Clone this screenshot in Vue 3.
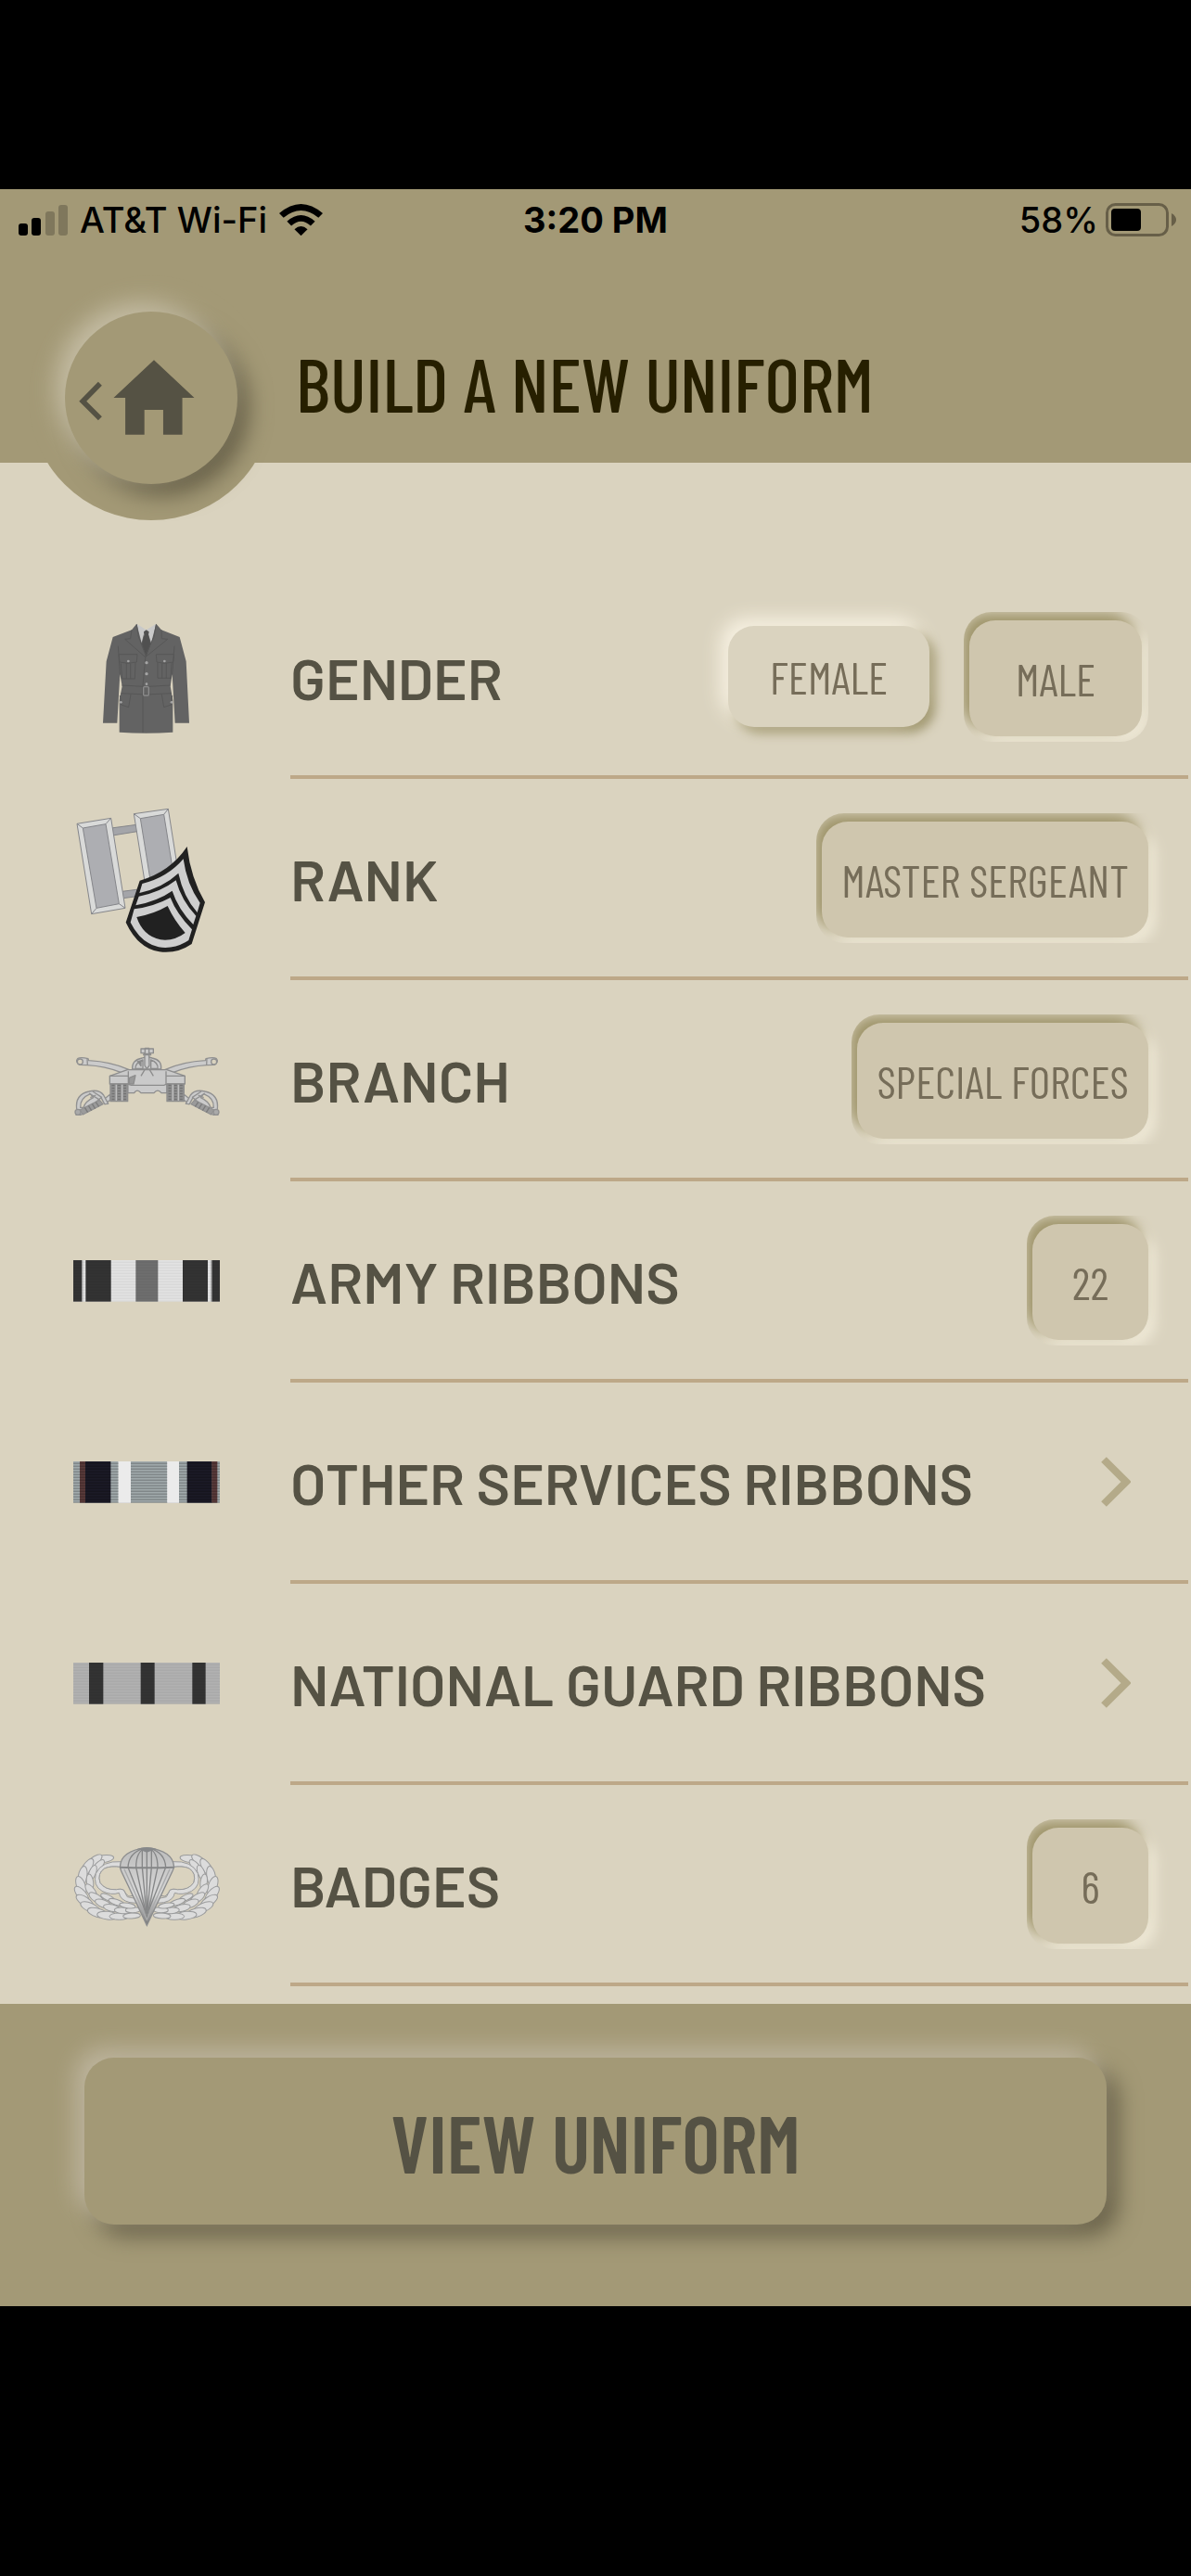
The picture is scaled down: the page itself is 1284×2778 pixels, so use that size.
<script setup>
import { ref } from "vue";

const gender = ref("MALE");
const genders = ["FEMALE", "MALE"];

const rows = [
    { key: "gender", label: "GENDER" },
    { key: "rank", label: "RANK", value: "MASTER SERGEANT" },
    { key: "branch", label: "BRANCH", value: "SPECIAL FORCES" },
    { key: "army", label: "ARMY RIBBONS", value: "22" },
    { key: "other", label: "OTHER SERVICES RIBBONS" },
    { key: "guard", label: "NATIONAL GUARD RIBBONS" },
    { key: "badges", label: "BADGES", value: "6" },
];

// stripes: [x, width, colour]
const ribbons = {
    army: [
        [57, 474, "#e2e2e2"], [57, 28, "#333"], [97, 82, "#333"], [259, 72, "#6e6e6e"],
        [411, 81, "#333"], [505, 26, "#333"],
    ],
    other: [
        [57, 474, "#a0a9ab"], [78, 19, "#593a3a"], [96, 82, "#1b1a26"], [203, 40, "#ebebeb"],
        [361, 38, "#ebebeb"], [425, 81, "#1b1a26"], [505, 18, "#593a3a"],
    ],
    guard: [
        [57, 474, "#b1b1b1"], [108, 46, "#333"], [275, 45, "#333"], [442, 43, "#333"],
    ],
};

// feathers of the left wing: [cx, cy, rx, ry, rotation]
const feathers = [
    [154, 103, 34, 12, -8], [122, 112, 34, 13, -38], [101, 132, 34, 14, -58], [87, 160, 34, 14, -80],
    [82, 190, 32, 14, 70], [84, 218, 32, 14, 50], [94, 240, 32, 14, 34], [112, 260, 34, 14, 24],
    [136, 277, 34, 14, 16], [168, 286, 34, 13, 6], [206, 289, 32, 11, 0], [246, 287, 28, 9, -3],
    [138, 126, 26, 11, -46], [119, 148, 26, 11, -68], [111, 178, 26, 11, 82], [115, 208, 28, 12, 54],
    [132, 230, 28, 12, 34], [154, 248, 28, 12, 22], [182, 262, 28, 11, 12], [216, 270, 26, 10, 4],
    [250, 268, 24, 9, -2], [168, 228, 24, 9, 24], [196, 243, 26, 9, 18], [232, 254, 26, 8, 8],
];
</script>

<template>
    <main class="page">
        <header class="header">
            <div class="status">
                <div class="status-left">
                    <svg class="signal" viewBox="0 0 53 34" aria-hidden="true">
                        <rect x="0" y="21" width="10" height="13" rx="3" />
                        <rect x="14" y="15" width="10" height="19" rx="3" />
                        <rect x="29" y="8" width="10" height="26" rx="3" opacity=".22" />
                        <rect x="43" y="1" width="10" height="33" rx="3" opacity=".22" />
                    </svg>
                    <span>AT&amp;T Wi-Fi</span>
                    <svg class="wifi" viewBox="0 0 140 102" aria-hidden="true">
                        <path d="M0 30Q70-30 140 30L126 44Q70-2 14 44Z" />
                        <path d="M25 56Q70 16 115 56L101 70Q70 42 39 70Z" />
                        <path d="M49 81Q70 62 91 81L70 102Z" />
                    </svg>
                </div>
                <strong class="time">3:20 PM</strong>
                <div class="status-right">
                    <span>58%</span>
                    <svg class="battery" viewBox="0 0 76 36" aria-hidden="true">
                        <rect x="1.5" y="1.5" width="65" height="33" rx="9" fill="none" stroke="#675f48" stroke-width="3" />
                        <rect x="6" y="6" width="32" height="24" rx="4" />
                        <path d="M71 11Q76 14 76 18T71 25Z" fill="#675f48" />
                    </svg>
                </div>
            </div>
            <div class="nav">
                <div class="halo">
                    <button class="home" type="button" aria-label="Back to home">
                        <svg viewBox="210 170 560 560" aria-hidden="true">
                            <path d="M324 404L268 461L324 517" fill="none" stroke="#555244" stroke-width="17" />
                            <path d="M499 327L630 450H591V570H529V489H468V570H406V450H368Z" fill="#555244" />
                        </svg>
                    </button>
                </div>
                <h1 class="title">BUILD A NEW UNIFORM</h1>
            </div>
        </header>

        <ul class="list">
            <li v-for="row in rows" :key="row.key" class="row">
                <svg v-if="row.key === 'gender'" class="icon" viewBox="0 15 600 510" aria-hidden="true">
                    <g stroke-linejoin="round">
                        <path d="M262 98L293 118L325 98L316 200H276Z" fill="#c9c9c9" />
                        <path
                            d="M262 98L246 118L185 141L164 220L153 419H199L208 262L215 300L206 345V449Q293 455 379 449V345L371 300L377 262L386 419H432L422 220L401 141L342 118L325 98L309 160L300 132L293 200L285 132L278 160Z"
                            fill="#636363"
                        />
                        <path d="M285 124L293 118L302 124L300 134L307 165L293 205L279 165L286 134Z" fill="#505050" />
                        <g fill="none" stroke="#575757" stroke-width="3">
                            <path d="M246 118L242 146L224 148L290 206L362 148L343 146L342 118" />
                            <path d="M262 100L268 140L291 200L318 140L325 100M291 200L282 300V450" />
                            <path d="M204 197H264L262 222L234 226L207 222ZM325 197H383L380 222L352 226L327 222Z" />
                            <path d="M211 226L215 276H256L258 224M229 226V276M242 226V276M330 224V274H372L375 224M344 226V274M358 226V274" />
                            <path d="M214 297Q293 306 371 297M212 323Q293 331 374 323" />
                            <path d="M208 330L212 360L236 368L243 326M377 330L374 360L350 368L343 326" />
                            <path d="M208 262L202 170M377 262L384 170" />
                        </g>
                        <rect x="284" y="302" width="17" height="28" rx="3" fill="none" stroke="#8b8b8b" stroke-width="4" />
                        <g fill="#a5a5a5">
                            <circle cx="294" cy="224" r="5" />
                            <circle cx="294" cy="260" r="5" />
                            <circle cx="294" cy="293" r="4" />
                            <circle cx="235" cy="219" r="4" />
                            <circle cx="352" cy="219" r="4" />
                            <circle cx="211" cy="352" r="4" />
                            <circle cx="375" cy="352" r="4" />
                        </g>
                    </g>
                </svg>

                <svg v-else-if="row.key === 'rank'" class="icon" viewBox="0 5 600 570" aria-hidden="true">
                    <g stroke="#85868a" stroke-width="3" stroke-linejoin="round">
                        <path d="M180 128L262 117L264 139L184 152ZM215 333L300 322V344L218 355Z" fill="#a4a5a9" />
                        <path d="M69 114L179 96L225 387L116 406Z" fill="#d9dad9" />
                        <path d="M88 128L162 115L205 373L132 387Z" fill="#adaeb2" />
                        <path d="M69 114L88 128M179 96L162 115M225 387L205 373M116 406L132 387" />
                        <path d="M253 82L364 66L410 357L300 376Z" fill="#d9dad9" />
                        <path d="M274 97L350 84L392 345L316 357Z" fill="#adaeb2" />
                        <path d="M253 82L274 97M364 66L350 84" />
                    </g>
                    <path d="M425 188Q437 290 483 368L440 503Q392 536 335 528Q266 517 227 433L272 298Q370 270 425 188Z" fill="#212121" />
                    <path d="M413 228Q424 310 467 370L458 401Q413 350 397 274Q348 320 271 338L280 308Q362 288 413 228Z" fill="#cecece" />
                    <path d="M389 297Q408 365 454 412L445 440Q396 390 377 331Q332 363 259 378L269 349Q339 336 389 297Z" fill="#cecece" />
                    <path d="M371 353Q391 405 441 456L430 491Q385 521 333 513Q275 500 242 433L254 390Q318 382 371 353Z" fill="#cecece" />
                    <path d="M362 380Q383 426 419 467Q382 495 339 489Q282 477 262 416Q320 405 362 380Z" fill="#212121" />
                </svg>

                <svg v-else-if="row.key === 'branch'" class="icon" viewBox="0 -4 600 390" aria-hidden="true">
                    <defs>
                        <g id="sabre" stroke="#919191" stroke-width="4" stroke-linejoin="round" fill="#cbcbcb">
                            <path d="M71 124Q80 118 105 124L107 130Q180 134 238 160L212 169Q160 148 101 145L78 144Q62 134 71 124Z" />
                            <circle cx="79" cy="134" r="9" fill="#dad3bf" />
                            <path d="M102 122L103 146" />
                            <path d="M153 258L176 240V258L160 271Z" />
                            <path d="M68 288Q62 240 108 230Q140 222 155 242L170 270L158 271L147 250L82 306L66 306Z" />
                            <path d="M80 282Q78 252 112 238L122 250Q96 262 90 282Z" fill="#dad3bf" />
                            <path d="M112 250L130 242M108 236L140 256M120 230L150 250" />
                            <path d="M78 290L142 258L153 271L88 305Z" fill="#9b9b9b" />
                            <path d="M94 282L104 298M106 276L116 292M118 270L128 286M130 265L140 279" stroke="#7b7b7b" />
                            <circle cx="72" cy="297" r="9" fill="#aaa" />
                        </g>
                    </defs>
                    <use href="#sabre" />
                    <use href="#sabre" transform="matrix(-1 0 0 1 591 0)" />
                    <g stroke="#8d8d8d" stroke-width="4" stroke-linejoin="round" fill="#cacaca">
                        <path d="M233 206H360V235H342Q330 220 318 235H276Q263 220 254 235H233Z" />
                        <path d="M175 180L232 160H360L418 180V206H360L350 210H245L233 206H175Z" />
                        <path d="M248 158Q246 128 280 122Q295 116 312 122Q344 128 341 158Z" />
                        <path d="M258 156Q258 136 282 128V156ZM308 128Q332 136 330 156H308Z" />
                        <path d="M276 92H316V106H304L308 112H284L288 106H276ZM289 90H302V108H289Z" />
                        <path d="M288 112H302L303 146L295 157L288 146Z" />
                        <path d="M175 180H235M357 180H418M235 165V206M357 165V206M288 160L276 180M304 160L316 180" fill="none" />
                        <path d="M265 132H276V148Z" fill="#858585" />
                        <path d="M238 186L258 178L252 206H238Z" fill="#999" />
                        <path d="M177 206H233V262H177ZM360 206H415V262H360Z" fill="#929292" />
                        <path d="M196 208V260M215 208V260M379 208V260M397 208V260" stroke="#bebebe" />
                        <path
                            d="M186 208V260M205 208V260M224 208V260M369 208V260M388 208V260M406 208V260"
                            stroke="#737373" stroke-width="9" stroke-dasharray="5 4"
                        />
                    </g>
                </svg>

                <svg v-else-if="ribbons[row.key]" class="icon" viewBox="0 52 600 140" aria-hidden="true">
                    <defs>
                        <pattern :id="`weave-${row.key}`" width="20" height="9" patternUnits="userSpaceOnUse">
                            <rect width="20" height="3" fill="#000" :opacity="row.key === 'other' ? 0.3 : 0.06" />
                        </pattern>
                    </defs>
                    <rect v-for="s in ribbons[row.key]" :key="s[0] + s[2]" :x="s[0]" y="58" :width="s[1]" height="134" :fill="s[2]" />
                    <template v-if="row.key === 'army'">
                        <rect x="85" y="58" width="3" height="134" fill="#999" />
                        <rect x="502" y="58" width="3" height="134" fill="#999" />
                    </template>
                    <rect x="57" y="58" width="474" height="134" :fill="`url(#weave-${row.key})`" />
                    <template v-if="row.key === 'other'">
                        <rect x="203" y="58" width="40" height="134" fill="#ebebeb" />
                        <rect x="361" y="58" width="38" height="134" fill="#ebebeb" />
                    </template>
                </svg>

                <svg v-else class="icon" viewBox="0 -10 600 390" aria-hidden="true">
                    <defs>
                        <linearGradient id="canopy" x1="0" y1="0" x2="0" y2="1">
                            <stop offset="0" stop-color="#bcbcbc" />
                            <stop offset=".6" stop-color="#d8d8d8" />
                            <stop offset="1" stop-color="#777" />
                        </linearGradient>
                        <g id="wing" stroke="#9a9b9c" stroke-width="3" fill="#dcdcdc">
                            <ellipse
                                v-for="(f, i) in feathers" :key="i"
                                :cx="f[0]" :cy="f[1]" :rx="f[2]" :ry="f[3]"
                                :transform="`rotate(${f[4]} ${f[0]} ${f[1]})`"
                            />
                            <path d="M212 112Q150 108 130 150Q120 190 150 207Q180 222 205 213Q208 236 240 244L262 246V232L232 226Q225 214 220 203Q210 198 196 202Q160 204 144 180Q134 150 158 134Q178 124 214 130Z" />
                            <path d="M214 130Q178 124 158 134Q134 150 144 180Q160 204 196 202Q210 198 220 203Q226 216 236 224L250 222Z" fill="#dad3bf" />
                        </g>
                    </defs>
                    <use href="#wing" />
                    <use href="#wing" transform="matrix(-1 0 0 1 590 0)" />
                    <path d="M208 130Q210 76 295 67Q380 76 383 130L378 142L295 318L212 142Z" fill="url(#canopy)" stroke="#8c8d8e" stroke-width="4" />
                    <g fill="none" stroke="#858687" stroke-width="4">
                        <path d="M208 130Q295 134 383 130" stroke-width="6" />
                        <path d="M295 68V300M289 68Q260 80 260 130L292 280M301 68Q330 80 330 130L298 280" />
                        <path d="M284 69Q236 84 234 130L289 270M306 69Q354 84 356 130L301 270M280 70V130L293 270M310 70V130L297 270" />
                        <path d="M222 136L295 300L369 136" stroke="#a9aaab" />
                        <path d="M264 70Q295 62 326 70L295 82Z" fill="#86888a" stroke="none" />
                    </g>
                </svg>

                <div class="row-body">
                    <h2 class="label">{{ row.label }}</h2>
                    <div v-if="row.key === 'gender'" class="genders">
                        <template v-for="g in genders" :key="g">
                            <div v-if="gender === g" class="well closed">
                                <button class="pressed" type="button" aria-pressed="true">{{ g }}</button>
                            </div>
                            <button v-else class="raised" type="button" aria-pressed="false" @click="gender = g">{{ g }}</button>
                        </template>
                    </div>
                    <div v-else-if="row.value" class="well">
                        <button class="pressed" type="button">{{ row.value }}</button>
                    </div>
                    <button v-else class="more" type="button" :aria-label="`Open ${row.label}`">
                        <svg viewBox="0 0 32 56" aria-hidden="true">
                            <path d="M3 4L27 28L3 52" fill="none" stroke="#b4aa89" stroke-width="8" />
                        </svg>
                    </button>
                </div>
            </li>
        </ul>

        <footer class="footer">
            <button class="view" type="button">VIEW UNIFORM</button>
        </footer>
    </main>
</template>

<style>
body {
    margin: 0;
    background: #000;
}
</style>

<style scoped>
.page {
    padding: 204px 0 291px;
    background: #000;
    font-family: Barlow, Roboto, sans-serif;
    color: #555244;
}

button {
    border: 0;
    padding: 0;
    background: none;
    color: inherit;
    cursor: pointer;
}

svg {
    display: block;
    flex: none;
}

.header {
    position: relative;
    z-index: 1;
    background: #a39976;
}

.status {
    display: grid;
    grid-template-columns: 1fr auto 1fr;
    align-items: center;
    height: 66px;
    padding: 0 16px;
    font-family: Inter, sans-serif;
    font-size: 38px;
    font-weight: 500;
    color: #000;
}

.status-left,
.status-right {
    display: flex;
    align-items: center;
}

.status-left {
    gap: 13px;
    padding-left: 4px;
}

.status-right {
    justify-content: flex-end;
    gap: 8px;
}

.time {
    font-weight: 700;
}

.signal {
    width: 53px;
}

.wifi {
    width: 47px;
}

.battery {
    width: 76px;
}

.nav {
    display: flex;
    gap: 24px;
    padding: 27px 31px 0;
}

.halo {
    flex: none;
    width: 264px;
    height: 264px;
    margin-bottom: -62px;
    display: flex;
    align-items: center;
    justify-content: center;
    border-radius: 50%;
    background: #a39976;
}

.home {
    width: 186px;
    height: 186px;
    border-radius: 50%;
    background: #a39976;
    box-shadow: -10px -10px 24px #c4bca3, 12px 12px 24px #676048;
}

.title {
    margin: 76px 0 0;
    font-family: "Barlow Condensed", "Roboto Condensed", "Liberation Sans Narrow", sans-serif;
    font-size: 81px;
    font-weight: 500;
    line-height: 80px;
    white-space: nowrap;
    color: #261f00;
}

.list {
    margin: 0;
    padding: 124px 3px 19px 60px;
    list-style: none;
    background: #dad3bf;
}

.row {
    display: flex;
    align-items: stretch;
    gap: 53px;
}

.icon {
    width: 200px;
    align-self: center;
    margin-bottom: 4px;
}

.row-body {
    flex: 1;
    display: flex;
    align-items: center;
    justify-content: space-between;
    height: 213px;
    padding-right: 19px;
    border-bottom: 4px solid #bda888;
}

.label {
    margin: 0;
    font-size: 62px;
    font-weight: 600;
    white-space: nowrap;
}

.genders {
    display: flex;
    align-items: center;
    gap: 37px;
    padding-right: 24px;
}

.raised,
.pressed {
    border-radius: 28px;
    font-family: "Barlow Condensed", "Roboto Condensed", "Liberation Sans Narrow", sans-serif;
    font-size: 49px;
    font-weight: 400;
    white-space: nowrap;
    color: #766d59;
}

.raised {
    width: 217px;
    height: 109px;
    background: #dad3bf;
    box-shadow: -8px -8px 20px #f8f2e3, 6px 6px 12px #9c936a;
}

.well {
    padding: 9px 24px 6px 6px;
    overflow: hidden;
    border-radius: 30px 0 0 30px;
}

.well.closed {
    padding-right: 7px;
    border-radius: 30px;
}

.pressed {
    display: block;
    min-width: 125px;
    height: 125px;
    padding: 0 21px;
    background: #cfc6ae;
    box-shadow: -8px -8px 14px #a0966c, 8px 8px 14px #eee8d6;
}

.closed .pressed {
    min-width: 186px;
}

.more {
    padding-right: 43px;
}

.more svg {
    width: 32px;
}

.footer {
    padding: 58px 91px 88px;
    background: #a39976;
}

.view {
    width: 100%;
    height: 180px;
    border-radius: 32px;
    background: #a39976;
    box-shadow: -10px -10px 24px #beb59e, 12px 12px 24px #676048;
    font-family: "Barlow Condensed", "Roboto Condensed", "Liberation Sans Narrow", sans-serif;
    font-size: 87px;
    font-weight: 600;
}
</style>
